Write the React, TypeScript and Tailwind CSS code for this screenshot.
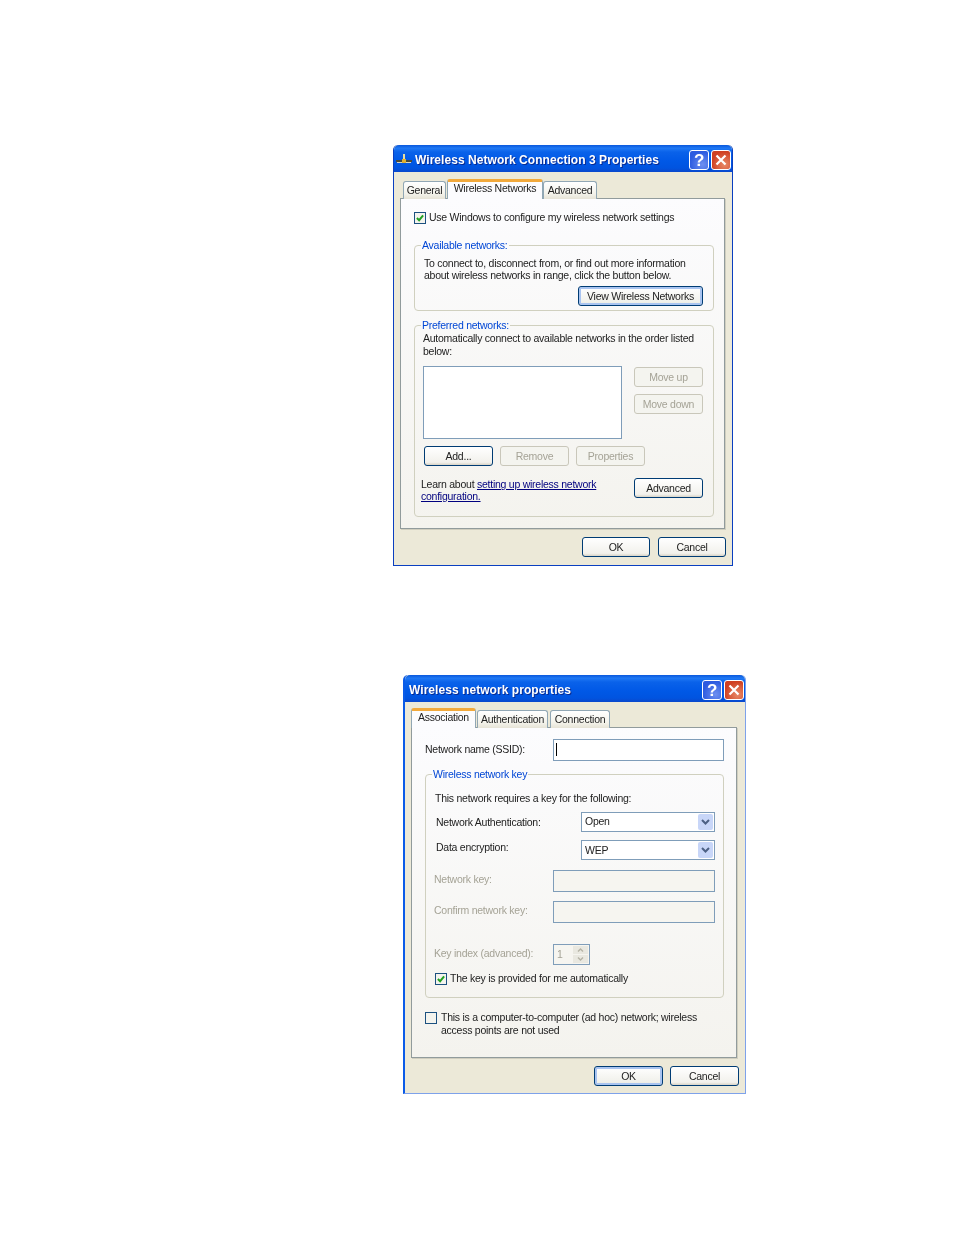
import React from 'react';

const font = 'font-["Liberation_Sans",Arial,sans-serif]';

function TitleBar({ title, icon }: { title: string; icon?: boolean }) {
    return (
        <div className="h-[27px] flex items-center justify-between pt-[3px] pl-[2px] pr-px rounded-t-[5px] bg-[linear-gradient(180deg,#0a58dc_0%,#1f78f4_12%,#0a62ea_26%,#0058e6_60%,#0054e0_85%,#0a48cc_100%)]">
            <div className="flex items-center">
                {icon && (
                    <svg width="18" height="14" viewBox="0 0 18 14" className="mr-px">
                        <rect x="0" y="7" width="16" height="2" fill="#4a4a3a" />
                        <rect x="1" y="9" width="14" height="1" fill="#d8d4c0" />
                        <rect x="7" y="1" width="2" height="6" fill="#e8dfa0" />
                        <rect x="6" y="6" width="4" height="4" fill="#e0b030" />
                    </svg>
                )}
                <span className={`text-white font-bold text-[12px] leading-none tracking-[0.05px] [text-shadow:1px_1px_0_#0a2a90] ${icon ? '' : 'pl-[2px]'}`}>{title}</span>
            </div>
            <div className="flex gap-[2px]">
                <div className="w-[20px] h-[20px] rounded-[3px] border border-white bg-[radial-gradient(circle_at_70%_75%,#6d8ff0,#2c5be0_70%)] flex items-center justify-center text-white font-bold text-[17px] leading-none">?</div>
                <div className="w-[20px] h-[20px] rounded-[3px] border border-white bg-[radial-gradient(circle_at_70%_75%,#e88a68,#cf4022_70%)] flex items-center justify-center">
                    <svg width="12" height="12" viewBox="0 0 12 12"><path d="M1.5 1.5l9 9M10.5 1.5l-9 9" stroke="#fff" strokeWidth="2.2" fill="none" /></svg>
                </div>
            </div>
        </div>
    );
}

function Tab({ label, active, width }: { label: string; active?: boolean; width: string }) {
    if (active) {
        return (
            <div className={`${width} h-[20px] z-10 relative rounded-t-[3px] border-x border-[#91a7b4] border-t-[3px] border-t-[#f2a93b] bg-[#fcfcfe] text-center text-[10.5px] leading-[12px] text-[#222]`}>{label}</div>
        );
    }
    return (
        <div className={`${width} h-[18px] rounded-t-[3px] border-x border-t border-[#91a7b4] bg-[linear-gradient(180deg,#ffffff,#f3f2ea_70%,#e6e3d6)] text-center text-[10.5px] leading-[17px] text-[#222]`}>{label}</div>
    );
}

function Btn({ label, width, disabled, focus }: { label: string; width: string; disabled?: boolean; focus?: boolean }) {
    const look = disabled
        ? 'border-[#c9c7ba] bg-[#f4f4ef] text-[#a5a396]'
        : focus
            ? 'border-[#003c74] bg-[linear-gradient(180deg,#ffffff,#f0f0ea_85%,#dcd8cc)] text-[#222] shadow-[inset_0_0_0_2px_#a9c4f0]'
            : 'border-[#003c74] bg-[linear-gradient(180deg,#ffffff,#f2f1ec_85%,#d8d3c6)] text-[#222]';
    return (
        <div className={`${width} h-[20px] shrink-0 rounded-[3px] border ${look} flex items-center justify-center text-[10.5px] leading-none`}>{label}</div>
    );
}

function Check({ checked }: { checked?: boolean }) {
    return (
        <div className="w-[12px] h-[12px] shrink-0 border border-[#1c5180] bg-[#f4f4ee] flex items-center justify-center">
            {checked && (
                <svg width="8" height="8" viewBox="0 0 9 9"><path d="M1 4.5l2.5 2.5L8 1.5" stroke="#21a121" strokeWidth="2.2" fill="none" /></svg>
            )}
        </div>
    );
}

function Group({ legend, height, className, children }: { legend: string; height: string; className: string; children: React.ReactNode }) {
    return (
        <fieldset className={`${height} ${className} block border border-[#d0d0bf] rounded-[4px]`}>
            <legend className="ml-[6px] px-[1px] text-[10.5px] leading-[12px] text-[#0046d5]">{legend}</legend>
            {children}
        </fieldset>
    );
}

function Panel({ children }: { children: React.ReactNode }) {
    return (
        <div className="h-[331px] -mt-px mr-px border border-[#919b9c] shadow-[1px_1px_0_#d0cebf] bg-[linear-gradient(180deg,#fcfcfe,#f4f3ee)]">{children}</div>
    );
}

function Select({ value }: { value: string }) {
    return (
        <div className="ml-auto w-[134px] h-[20px] border border-[#7f9db9] bg-white flex items-center justify-between pl-[3px] pr-px text-[10.5px] text-[#222]">
            {value}
            <div className="w-[15px] h-[16px] rounded-[2px] bg-[#c8d6f8] flex items-center justify-center">
                <svg width="9" height="6" viewBox="0 0 9 6"><path d="M1 1l3.5 3.5L8 1" stroke="#4d6185" strokeWidth="2" fill="none" /></svg>
            </div>
        </div>
    );
}

function WirelessConnection() {
    return (
        <div className="w-[340px] h-[421px] ml-[393px] border-x border-b border-[#0a3fc0] rounded-t-[5px] bg-[#ece9d8] blur-[0.3px]">
            <TitleBar title="Wireless Network Connection 3 Properties" icon />
            <div className="ml-[6px] w-[326px] mt-[7px]">
                <div className="flex items-end pl-[3px] h-[20px]">
                    <Tab label="General" width="w-[43px]" />
                    <div className="w-px" />
                    <Tab label="Wireless Networks" width="w-[96px]" active />
                    <Tab label="Advanced" width="w-[54px]" />
                </div>
                <Panel>
                    <div className="flex items-center h-[13px] mt-[12px] ml-[13px] gap-[3px] text-[10.5px] text-[#222]">
                        <Check checked />
                        <span>Use Windows to configure my wireless network settings</span>
                    </div>
                    <Group legend="Available networks:" height="h-[72px]" className="mt-[15px] ml-[13px] w-[300px]">
                        <p className="pl-[9px] pt-[6px] text-[10.5px] leading-[12px] text-[#222]">
                            To connect to, disconnect from, or find out more information<br />
                            about wireless networks in range, click the button below.
                        </p>
                        <div className="flex justify-end pr-[10px] mt-[5px]">
                            <Btn label="View Wireless Networks" width="w-[125px]" focus />
                        </div>
                    </Group>
                    <Group legend="Preferred networks:" height="h-[198px]" className="mt-[8px] ml-[13px] w-[300px]">
                        <div className="pl-[8px] pr-[10px]">
                            <p className="pt-px text-[10.5px] leading-[13px] text-[#222]">
                                Automatically connect to available networks in the order listed<br />below:
                            </p>
                            <div className="flex justify-between mt-[8px]">
                                <div className="w-[199px] h-[73px] border border-[#7f9db9] bg-white" />
                                <div className="flex flex-col gap-[7px] pt-px">
                                    <Btn label="Move up" width="w-[69px]" disabled />
                                    <Btn label="Move down" width="w-[69px]" disabled />
                                </div>
                            </div>
                            <div className="flex gap-[7px] mt-[7px] ml-px">
                                <Btn label="Add..." width="w-[69px]" />
                                <Btn label="Remove" width="w-[69px]" disabled />
                                <Btn label="Properties" width="w-[69px]" disabled />
                            </div>
                            <div className="flex justify-between mt-[12px] -ml-[2px]">
                                <p className="text-[10.5px] leading-[12px] text-[#222]">
                                    Learn about <span className="text-[#00007f] underline">setting up wireless network<br />configuration.</span>
                                </p>
                                <Btn label="Advanced" width="w-[69px]" />
                            </div>
                        </div>
                    </Group>
                </Panel>
                <div className="flex justify-end gap-[8px] mt-[8px]">
                    <Btn label="OK" width="w-[68px]" />
                    <Btn label="Cancel" width="w-[68px]" />
                </div>
            </div>
        </div>
    );
}

function WirelessProperties() {
    const dim = 'text-[10.5px] text-[#a5a396]';
    return (
        <div className="w-[343px] h-[419px] ml-[403px] mt-[109px] border-l-2 border-l-[#0a5be8] border-r border-b border-[#7ea2ea] rounded-t-[5px] bg-[#ece9d8] blur-[0.3px]">
            <TitleBar title="Wireless network properties" />
            <div className="ml-[6px] w-[327px] mt-[6px]">
                <div className="flex items-end h-[20px]">
                    <Tab label="Association" width="w-[65px]" active />
                    <div className="w-px" />
                    <Tab label="Authentication" width="w-[71px]" />
                    <div className="w-[2px]" />
                    <Tab label="Connection" width="w-[60px]" />
                </div>
                <Panel>
                    <div className="flex items-center mt-[11px] ml-[13px] h-[22px] text-[10.5px] text-[#222]">
                        <span className="w-[128px]">Network name (SSID):</span>
                        <div className="w-[171px] h-[22px] border border-[#7f9db9] bg-white pl-[2px] pt-[3px]">
                            <div className="w-px h-[13px] bg-black" />
                        </div>
                    </div>
                    <Group legend="Wireless network key" height="h-[230px]" className="mt-[7px] ml-[13px] w-[299px]">
                        <div className="pl-[9px] pr-[8px]">
                            <p className="mt-[12px] text-[10.5px] leading-[12px] text-[#222]">This network requires a key for the following:</p>
                            <div className="flex items-center mt-[8px] h-[20px] pl-px text-[10.5px] text-[#222]">
                                <span className="pt-[2px]">Network Authentication:</span>
                                <Select value="Open" />
                            </div>
                            <div className="flex items-start mt-[8px] h-[20px] pl-px text-[10.5px] leading-[14px] text-[#222]">
                                <span>Data encryption:</span>
                                <Select value="WEP" />
                            </div>
                            <div className={`flex items-center justify-between mt-[10px] h-[22px] -ml-px ${dim}`}>
                                <span className="pb-[2px]">Network key:</span>
                                <div className="w-[162px] h-[22px] border border-[#7f9db9] bg-[#f6f5f0]" />
                            </div>
                            <div className={`flex items-center justify-between mt-[9px] h-[22px] -ml-px ${dim}`}>
                                <span className="pb-[2px]">Confirm network key:</span>
                                <div className="w-[162px] h-[22px] border border-[#7f9db9] bg-[#f6f5f0]" />
                            </div>
                            <div className={`flex items-center mt-[21px] h-[21px] -ml-px ${dim}`}>
                                <span className="w-[119px] pb-[2px]">Key index (advanced):</span>
                                <div className="w-[37px] h-[21px] border border-[#7f9db9] bg-[#f6f5f0] flex justify-between pl-[3px] pr-px py-px leading-[17px]">
                                    1
                                    <div className="w-[15px] flex flex-col gap-px">
                                        <div className="h-[9px] bg-[#e9e8e0] flex items-center justify-center">
                                            <svg width="7" height="4" viewBox="0 0 7 4"><path d="M1 3.5l2.5-2.5L6 3.5" stroke="#b5b3a6" strokeWidth="1.4" fill="none" /></svg>
                                        </div>
                                        <div className="h-[9px] bg-[#e9e8e0] flex items-center justify-center">
                                            <svg width="7" height="4" viewBox="0 0 7 4"><path d="M1 .5L3.5 3 6 .5" stroke="#b5b3a6" strokeWidth="1.4" fill="none" /></svg>
                                        </div>
                                    </div>
                                </div>
                            </div>
                            <div className="flex items-center gap-[3px] mt-[7px] h-[13px] text-[10.5px] text-[#222]">
                                <Check checked />
                                <span>The key is provided for me automatically</span>
                            </div>
                        </div>
                    </Group>
                    <div className="flex gap-[4px] mt-[14px] ml-[13px] text-[10.5px] leading-[13px] text-[#222]">
                        <Check />
                        <p className="-mt-px">
                            This is a computer-to-computer (ad hoc) network; wireless<br />access points are not used
                        </p>
                    </div>
                </Panel>
                <div className="flex justify-end gap-[7px] mt-[8px] -mr-px">
                    <Btn label="OK" width="w-[69px]" focus />
                    <Btn label="Cancel" width="w-[69px]" />
                </div>
            </div>
        </div>
    );
}

export default function App() {
    return (
        <div className={`min-h-[1235px] w-[954px] bg-white pt-[145px] tracking-[-0.25px] ${font}`}>
            <WirelessConnection />
            <WirelessProperties />
        </div>
    );
}
